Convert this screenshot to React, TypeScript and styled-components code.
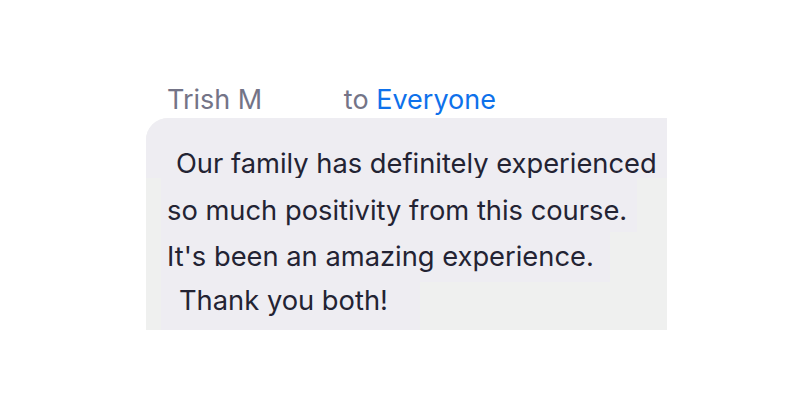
import React from "react";
import styled, { createGlobalStyle } from "styled-components";

const GlobalStyle = createGlobalStyle`
  html, body {
    margin: 0;
    padding: 0;
    background: #ffffff;
  }
  body {
    width: 800px;
    height: 400px;
    overflow: hidden;
    font-family: Inter, "Liberation Sans", sans-serif;
  }
`;

const Page = styled.div`
  display: flex;
  flex-direction: column;
  padding: 83px 0 0 146px;
`;

const Header = styled.div`
  display: flex;
  align-items: baseline;
  height: 35px;
  padding-left: 21px;
  font-size: 27px;
  line-height: 34px;
  color: #747487;
  white-space: pre;
`;

const Redacted = styled.span`
  display: inline-block;
  width: 74px;
`;

const Recipient = styled.span`
  color: #0e71eb;
`;

const Bubble = styled.div`
  width: 521px;
  height: 212px;
  background: #eff0ef;
  border-top-left-radius: 22px;
  overflow: hidden;
  display: flex;
  flex-direction: column;
  color: #232333;
  font-size: 27.3px;
`;

const Line = styled.div<{ $width?: number; $height: number; $indent: number; $bottom: number; $inset?: number }>`
  display: flex;
  align-items: flex-end;
  box-sizing: border-box;
  width: ${(p) => (p.$width ? `${p.$width}px` : "auto")};
  height: ${(p) => p.$height}px;
  margin-left: ${(p) => p.$inset ?? 0}px;
  padding: 0 0 ${(p) => p.$bottom}px ${(p) => p.$indent}px;
  background: #eeedf2;
  line-height: 1;
  white-space: pre;
`;

const lines = [
  { text: "Our family has definitely experienced", height: 60, indent: 30, bottom: 1, inset: 0 },
  { text: "so much positivity from this course.", width: 476, height: 54, indent: 6, bottom: 8, inset: 15 },
  { text: "It's been an amazing experience.", width: 449, height: 50, indent: 6, bottom: 12, inset: 15 },
  { text: "Thank you both!", width: 259, height: 48, indent: 18, bottom: 16, inset: 15 },
];

export default function App() {
  return (
    <>
      <GlobalStyle />
      <Page>
        <Header>
          Trish M<Redacted /> to <Recipient>Everyone</Recipient>
        </Header>
        <Bubble>
          {lines.map((l) => (
            <Line
              key={l.text}
              $width={l.width}
              $height={l.height}
              $indent={l.indent}
              $bottom={l.bottom}
              $inset={l.inset}
            >
              {l.text}
            </Line>
          ))}
        </Bubble>
      </Page>
    </>
  );
}
